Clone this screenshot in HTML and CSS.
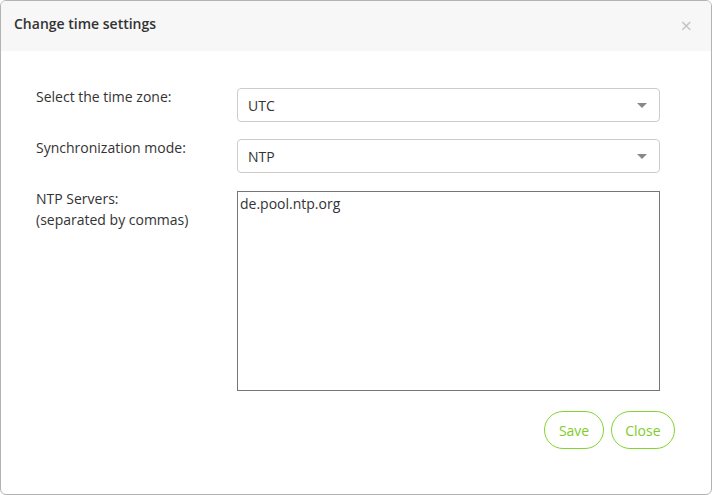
FILE: index.html
```html
<!DOCTYPE html>
<html lang="en">
<head>
    <meta charset="UTF-8">
    <title>Change time settings</title>
    <link rel="stylesheet" href="styles.css">
</head>
<body>

    <!-- Dialog -->
    <div class="dialog">
        <div class="dialog-header">
            <span class="dialog-title">Change time settings</span>
            <span class="dialog-close">&times;</span>
        </div>

        <div class="dialog-body">
            <div class="form-row">
                <label class="form-label">Select the time zone:</label>
                <div class="select-box">
                    <span>UTC</span>
                    <span class="caret"></span>
                </div>
            </div>

            <div class="form-row">
                <label class="form-label">Synchronization mode:</label>
                <div class="select-box">
                    <span>NTP</span>
                    <span class="caret"></span>
                </div>
            </div>

            <div class="form-row">
                <label class="form-label">NTP Servers:<br>(separated by commas)</label>
                <textarea class="servers">de.pool.ntp.org</textarea>
            </div>

            <div class="dialog-buttons">
                <button class="btn">Save</button>
                <button class="btn">Close</button>
            </div>
        </div>
    </div>

</body>
</html>
```

FILE: styles.css
```css
/* General styles */
body {
    font-family: "Open Sans", sans-serif;
    font-size: 14px;
    color: #333;
    margin: 0;
    padding: 0;
    background-color: #fff;
}

/* Dialog box */
.dialog {
    width: 710px;
    height: 493px;
    border: 1px solid #b3b3b3;
    border-radius: 6px;
    overflow: hidden;
    display: flex;
    flex-direction: column;
}

.dialog-header {
    display: flex;
    align-items: center;
    justify-content: space-between;
    box-sizing: border-box;
    height: 50px;
    padding: 0 19px 5px 13px;
    background-color: #f7f7f7;
}

.dialog-title {
    font-weight: 600;
    font-size: 14px;
    color: #333;
}

.dialog-close {
    font-size: 20px;
    color: #c4c4c4;
    line-height: 1;
    margin-top: 4px;
}

.dialog-body {
    padding: 37px 35px 0 35px;
}

/* Form rows */
.form-row {
    display: flex;
    align-items: flex-start;
    margin-bottom: 17px;
}

.form-label {
    width: 201px;
    margin-top: -1px;
    line-height: 20.5px;
}

.select-box {
    flex: 1;
    display: flex;
    align-items: center;
    justify-content: space-between;
    height: 32px;
    margin-right: 16px;
    padding: 0 12px 0 10px;
    border: 1px solid #ccc;
    border-radius: 4px;
}

.caret {
    width: 0;
    height: 0;
    border-left: 5px solid transparent;
    border-right: 5px solid transparent;
    border-top: 5px solid #888;
}

.servers {
    flex: 1;
    height: 194px;
    margin: 1px 16px 0 0;
    padding: 2px;
    border: 1px solid #767676;
    font-family: "Open Sans", sans-serif;
    font-size: 14px;
    color: #333;
    resize: none;
    outline: none;
}

/* Buttons */
.dialog-buttons {
    display: flex;
    justify-content: flex-end;
    gap: 7px;
    margin-top: 20px;
    margin-right: 1px;
}

.btn {
    height: 38px;
    padding: 0 13.5px;
    background-color: #fff;
    border: 1px solid #84d330;
    border-radius: 19px;
    font-family: "Open Sans", sans-serif;
    font-size: 14px;
    color: #7fcb2c;
    cursor: pointer;
}
```
